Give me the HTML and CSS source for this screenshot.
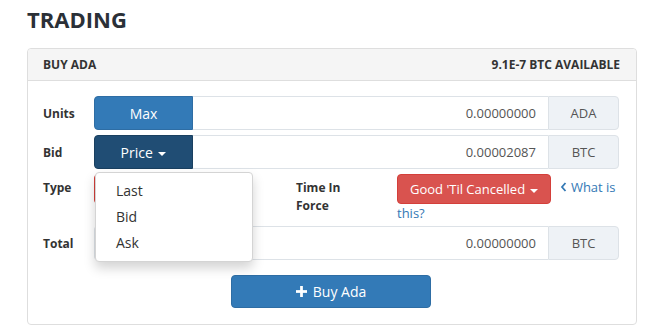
FILE: index.html
```html
<!DOCTYPE html>
<html lang="en">
  <head>
    <meta charset="UTF-8" />
    <title>Trading</title>
    <link rel="stylesheet" href="styles.css">
  </head>
  <body>
    <div class="page">
      <h2 class="title">TRADING</h2>

      <div class="panel">
        <div class="panel-head">
          <span>BUY ADA</span>
          <span>9.1E-7 BTC AVAILABLE</span>
        </div>

        <div class="panel-body">
          <div class="row">
            <label class="lbl">Units</label>
            <div class="group">
              <button class="btn btn-blue side">Max</button>
              <div class="field">0.00000000</div>
              <span class="addon">ADA</span>
            </div>
          </div>

          <div class="row">
            <label class="lbl">Bid</label>
            <div class="group">
              <div class="dropdown">
                <button class="btn btn-dark side">Price <span class="caret"></span></button>
                <!-- open price menu -->
                <ul class="menu">
                  <li>Last</li>
                  <li>Bid</li>
                  <li>Ask</li>
                </ul>
              </div>
              <div class="field">0.00002087</div>
              <span class="addon">BTC</span>
            </div>
          </div>

          <div class="row row-type">
            <label class="lbl">Type</label>
            <div class="type-cell">
              <button class="btn btn-red type-btn">Limit <span class="caret"></span></button>
            </div>
            <label class="lbl tif-lbl">Time In Force</label>
            <div class="tif-cell">
              <button class="btn btn-red tif-btn">Good 'Til Cancelled <span class="caret"></span></button>
              <a class="help" href="#"><svg class="chev" viewBox="0 0 8 10"><path d="M5.5 1 L2 5 L5.5 9" /></svg>What is this?</a>
            </div>
          </div>

          <div class="row">
            <label class="lbl">Total</label>
            <div class="group">
              <div class="field field-first">0.00000000</div>
              <span class="addon">BTC</span>
            </div>
          </div>

          <div class="actions">
            <button class="btn btn-blue buy">
              <svg class="plus" viewBox="0 0 12 12"><rect x="4.5" y="0" width="3" height="12" /><rect x="0" y="4.5" width="12" height="3" /></svg>
              Buy Ada
            </button>
          </div>
        </div>
      </div>
    </div>
  </body>
</html>
```

FILE: styles.css
```css
body {
  margin: 0;
  background: #fff;
  font-family: 'Open Sans', 'Noto Sans', sans-serif;
  color: #333;
}

.page {
  padding: 0 11px 0 27px;
}

.title {
  margin: 0;
  padding-top: 6px;
  height: 42px;
  font-size: 22px;
  font-weight: 700;
  color: #2b3037;
  line-height: 26px;
}

.panel {
  border: 1px solid #dedede;
  border-radius: 4px;
}

.panel-head {
  display: flex;
  justify-content: space-between;
  padding: 9px 16px 9px 15px;
  background-color: #f5f5f5;
  border-bottom: 1px solid #dedede;
  border-radius: 4px 4px 0 0;
  font-size: 12px;
  font-weight: 700;
  line-height: 13px;
  color: #333;
}

.panel-body {
  padding: 15px 17px 16px 15px;
}

.row {
  display: flex;
  align-items: center;
  margin-bottom: 5px;
}

.lbl {
  width: 51px;
  flex-shrink: 0;
  font-size: 12px;
  font-weight: 700;
  color: #333;
}

.group {
  flex: 1;
  display: flex;
  height: 34px;
}

.btn {
  font-family: inherit;
  border: 1px solid transparent;
  border-radius: 4px;
  color: #fff;
  cursor: pointer;
  padding: 0 12px;
}

.btn-blue {
  background-color: #337ab7;
  border-color: #2e6da4;
}

.btn-dark {
  background-color: #204d74;
  border-color: #1a4060;
}

.btn-red {
  background-color: #d9534f;
  border-color: #d43f3a;
}

.side {
  width: 99px;
  height: 34px;
  font-size: 14px;
  border-radius: 4px 0 0 4px;
}

.caret {
  display: inline-block;
  width: 0;
  height: 0;
  margin-left: 2px;
  vertical-align: middle;
  border-top: 4px solid #fff;
  border-left: 4px solid transparent;
  border-right: 4px solid transparent;
}

.dropdown {
  position: relative;
  display: flex;
}

.menu {
  position: absolute;
  top: 100%;
  left: 1px;
  z-index: 5;
  width: 156px;
  margin: 3px 0 0;
  padding: 5px 0;
  list-style: none;
  background: #fff;
  border: 1px solid #d4d4d4;
  border-radius: 4px;
  box-shadow: 0 6px 12px rgba(0, 0, 0, 0.175);
}

.menu li {
  padding: 0 20px;
  font-size: 14px;
  line-height: 26px;
  color: #333;
}

.field {
  flex: 1;
  display: flex;
  align-items: center;
  justify-content: flex-end;
  padding: 0 12px;
  font-size: 13px;
  color: #555;
  border: 1px solid #dde2e7;
  border-left: none;
  border-right: none;
}

.field-first {
  border-left: 1px solid #dde2e7;
  border-radius: 4px 0 0 4px;
}

.addon {
  width: 69px;
  display: flex;
  align-items: center;
  justify-content: center;
  font-size: 13px;
  color: #555;
  background-color: #eef2f6;
  border: 1px solid #dde2e7;
  border-radius: 0 4px 4px 0;
}

.row-type {
  align-items: flex-start;
  height: 47px;
}

.row-type .lbl {
  line-height: 18px;
  padding-top: 5px;
}

.type-cell {
  width: 202px;
}

.type-btn {
  width: 100px;
  height: 30px;
  font-size: 13px;
}

.tif-lbl {
  width: 60px;
  margin-right: 41px;
}

.tif-cell {
  width: 222px;
  font-size: 13px;
  line-height: 18px;
}

.tif-btn {
  height: 30px;
  font-size: 13px;
  margin-right: 5px;
  vertical-align: middle;
}

.help {
  color: #3479b5;
  text-decoration: none;
}

.chev {
  width: 8px;
  height: 10px;
  margin-right: 3px;
  fill: none;
  stroke: #3479b5;
  stroke-width: 1.8;
}

.actions {
  display: flex;
  justify-content: center;
  padding-top: 10px;
}

.buy {
  width: 200px;
  height: 33px;
  font-size: 14px;
  display: flex;
  align-items: center;
  justify-content: center;
}

.plus {
  width: 11px;
  height: 11px;
  fill: #fff;
  margin-right: 6px;
}
```
